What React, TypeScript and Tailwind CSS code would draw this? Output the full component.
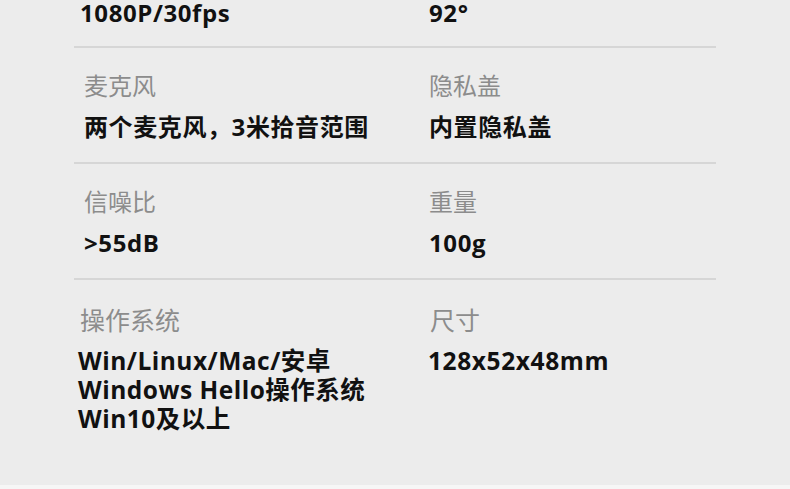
const font = {
  fontFamily: '"Open Sans", "Noto Sans CJK SC", sans-serif',
};

type Spec = { label: string; value: string[] };

const rows: [Spec, Spec][] = [
  [
    { label: "麦克风", value: ["两个麦克风，3米拾音范围"] },
    { label: "隐私盖", value: ["内置隐私盖"] },
  ],
  [
    { label: "信噪比", value: [">55dB"] },
    { label: "重量", value: ["100g"] },
  ],
];

const Cell = ({ label, value }: Spec) => (
  <div>
    <div className="text-[24px] leading-[32px] text-[#8c8c8c]">{label}</div>
    <div className="mt-[9px] text-[24px] leading-[32px] font-bold tracking-[0.6px] text-[#111]">
      {value.map((v) => (
        <div key={v}>{v}</div>
      ))}
    </div>
  </div>
);

export default function App() {
  return (
    <div className="w-[790px] h-[489px] bg-[#ececec] overflow-hidden flex flex-col" style={font}>
      <div className="flex-1 px-[74px] text-[#111]">
        <div className="grid grid-cols-[345px_1fr] pl-[6px] h-[46px] text-[24px] leading-[26px] font-bold tracking-[0.6px]">
          <div>1080P/30fps</div>
          <div className="pl-[4px]">92°</div>
        </div>
        {rows.map(([a, b]) => (
          <div key={a.label} className="border-t-2 border-[#d6d6d6] grid grid-cols-[345px_1fr] pl-[10px] pt-[22px] h-[116px]">
            <Cell {...a} />
            <Cell {...b} />
          </div>
        ))}
        <div className="border-t-2 border-[#d6d6d6] grid grid-cols-[350px_1fr] pl-[4px] pt-[24px]">
          <div>
            <div className="pl-[2px] text-[25px] leading-[32px] text-[#8c8c8c]">操作系统</div>
            <div className="mt-[10px] text-[24.5px] leading-[29px] font-bold tracking-[0.5px] text-[#111]">
              <div>Win/Linux/Mac/安卓</div>
              <div>Windows Hello操作系统</div>
              <div>Win10及以上</div>
            </div>
          </div>
          <div>
            <div className="pl-[2px] text-[25px] leading-[32px] text-[#8c8c8c]">尺寸</div>
            <div className="mt-[10px] text-[24.5px] leading-[29px] font-bold tracking-[0.6px] text-[#111]">128x52x48mm</div>
          </div>
        </div>
      </div>
      <div className="h-[4px] bg-[#f6f6f6]" />
    </div>
  );
}
